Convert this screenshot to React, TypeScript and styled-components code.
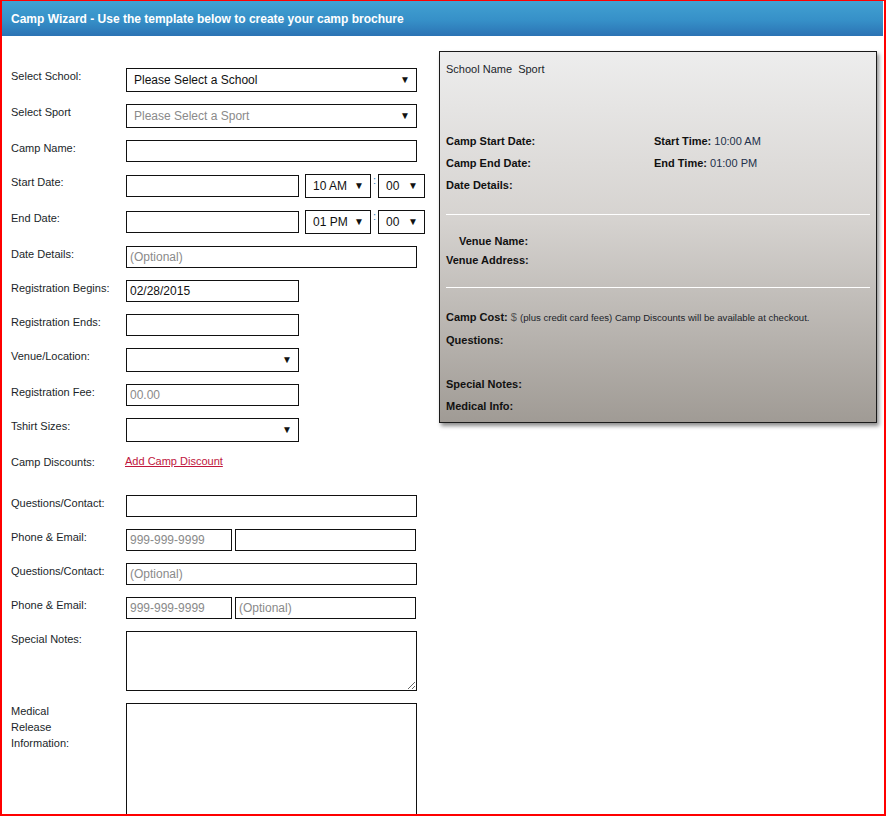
import React from "react";
import styled, { createGlobalStyle } from "styled-components";

const GlobalStyle = createGlobalStyle`
  html, body { margin: 0; padding: 0; background: #fff; }
  body { font-family: "Liberation Sans", Arial, sans-serif; }
  * { box-sizing: border-box; }
`;

const Frame = styled.div`
  width: 886px;
  height: 816px;
  border: 2px solid #ff0000;
  border-top-width: 1px;
  overflow: hidden;
  background: #fff;
`;

const Header = styled.div`
  height: 35px;
  display: flex;
  align-items: center;
  padding-left: 9px;
  margin-right: 1px;
  background: linear-gradient(to bottom, #42a1d2 0%, #3690c8 55%, #2b73b4 100%);
  color: #fff;
  font-weight: bold;
  font-size: 12px;
`;

const Body = styled.div`
  display: flex;
  align-items: flex-start;
`;

const FormColumn = styled.div`
  width: 437px;
  flex-shrink: 0;
  padding: 32px 0 0 9px;
  display: flex;
  flex-direction: column;
  gap: 12px;
`;

const Row = styled.div<{ $after?: number }>`
  display: flex;
  align-items: flex-start;
  margin-bottom: ${(p) => p.$after ?? 0}px;
`;

const Label = styled.div<{ $top?: number }>`
  width: 115px;
  flex-shrink: 0;
  padding-top: ${(p) => p.$top ?? 0}px;
  font-size: 11px;
  line-height: 16px;
  color: #1b1f2a;
`;

const Fields = styled.div`
  display: flex;
  align-items: center;
`;

const TextBox = styled.input<{ $w: number }>`
  width: ${(p) => p.$w}px;
  height: 22px;
  margin: 0;
  padding: 0 3px;
  border: 1px solid #111;
  border-radius: 0;
  font-family: "Liberation Sans", Arial, sans-serif;
  font-size: 12px;
  color: #111;
  background: #fff;
  outline: none;
  &::placeholder { color: #8a8a8a; }
`;

const NoteArea = styled.textarea<{ $h: number }>`
  width: 291px;
  height: ${(p) => p.$h}px;
  margin: 0;
  padding: 3px;
  border: 1px solid #111;
  border-radius: 0;
  font-family: "Liberation Sans", Arial, sans-serif;
  font-size: 12px;
  display: block;
  outline: none;
`;

const SelectBox = styled.div<{ $w: number; $muted?: boolean }>`
  width: ${(p) => p.$w}px;
  height: 24px;
  border: 1px solid #111;
  background: #fff;
  display: flex;
  align-items: center;
  justify-content: space-between;
  padding: 0 6px 0 7px;
  font-size: 12px;
  color: ${(p) => (p.$muted ? "#8a8a8a" : "#111")};
`;

const Caret = styled.span`
  font-size: 10px;
  color: #111;
  line-height: 1;
`;

const TimeColon = styled.span`
  width: 7px;
  text-align: center;
  font-size: 11px;
  color: #2a7ab8;
  align-self: flex-start;
  line-height: 12px;
`;

const Gap = styled.span<{ $w: number }>`
  display: inline-block;
  width: ${(p) => p.$w}px;
`;

const DiscountLink = styled.a`
  font-size: 11px;
  line-height: 14px;
  margin-left: -1px;
  color: #c0163d;
  text-decoration: underline;
  cursor: pointer;
`;

const Preview = styled.div`
  width: 438px;
  height: 372px;
  margin-top: 15px;
  border: 1px solid #1a1a1a;
  background: linear-gradient(to bottom, #ededed 0%, #d6d3d0 45%, #a09b95 100%);
  box-shadow: 2px 3px 4px rgba(0, 0, 0, 0.45);
  padding: 10px 6px 0 6px;
  font-size: 11px;
  color: #1b1f2a;
`;

const Line = styled.div<{ $top?: number; $indent?: number }>`
  line-height: 14px;
  margin-top: ${(p) => p.$top ?? 0}px;
  padding-left: ${(p) => p.$indent ?? 0}px;
`;

const Pair = styled.div<{ $top?: number }>`
  display: grid;
  grid-template-columns: 208px 1fr;
  line-height: 14px;
  margin-top: ${(p) => p.$top ?? 0}px;
`;

const B = styled.b`
  font-weight: bold;
  color: #111;
`;

const Value = styled.span`
  color: #22304a;
`;

const Dollar = styled.span`
  color: #555;
`;

const Fine = styled.span`
  font-size: 9.6px;
  color: #1b1f2a;
`;

const Divider = styled.hr<{ $top: number }>`
  border: 0;
  border-top: 1px solid #fff;
  margin: ${(p) => p.$top}px 0 0 0;
  height: 0;
`;

function Select({ w, text, muted }: { w: number; text?: string; muted?: boolean }) {
  return (
    <SelectBox $w={w} $muted={muted}>
      <span>{text ?? ""}</span>
      <Caret>▼</Caret>
    </SelectBox>
  );
}

export default function App() {
  return (
    <>
      <GlobalStyle />
      <Frame>
        <Header>Camp Wizard - Use the template below to create your camp brochure</Header>
        <Body>
          <FormColumn>
            <Row>
              <Label>Select School:</Label>
              <Select w={291} text="Please Select a School" />
            </Row>
            <Row>
              <Label>Select Sport</Label>
              <Select w={291} text="Please Select a Sport" muted />
            </Row>
            <Row>
              <Label>Camp Name:</Label>
              <TextBox $w={291} />
            </Row>
            <Row>
              <Label>Start Date:</Label>
              <Fields>
                <TextBox $w={173} />
                <Gap $w={6} />
                <Select w={66} text="10 AM" />
                <TimeColon>:</TimeColon>
                <Select w={47} text="00" />
              </Fields>
            </Row>
            <Row>
              <Label>End Date:</Label>
              <Fields>
                <TextBox $w={173} />
                <Gap $w={6} />
                <Select w={66} text="01 PM" />
                <TimeColon>:</TimeColon>
                <Select w={47} text="00" />
              </Fields>
            </Row>
            <Row>
              <Label>Date Details:</Label>
              <TextBox $w={291} placeholder="(Optional)" />
            </Row>
            <Row>
              <Label>Registration Begins:</Label>
              <TextBox $w={173} defaultValue="02/28/2015" />
            </Row>
            <Row>
              <Label>Registration Ends:</Label>
              <TextBox $w={173} />
            </Row>
            <Row>
              <Label>Venue/Location:</Label>
              <Select w={173} />
            </Row>
            <Row>
              <Label>Registration Fee:</Label>
              <TextBox $w={173} placeholder="00.00" />
            </Row>
            <Row>
              <Label>Tshirt Sizes:</Label>
              <Select w={173} />
            </Row>
            <Row $after={13}>
              <Label>Camp Discounts:</Label>
              <DiscountLink>Add Camp Discount</DiscountLink>
            </Row>
            <Row>
              <Label>Questions/Contact:</Label>
              <TextBox $w={291} />
            </Row>
            <Row>
              <Label>Phone &amp; Email:</Label>
              <Fields>
                <TextBox $w={106} placeholder="999-999-9999" />
                <Gap $w={3} />
                <TextBox $w={181} />
              </Fields>
            </Row>
            <Row>
              <Label>Questions/Contact:</Label>
              <TextBox $w={291} placeholder="(Optional)" />
            </Row>
            <Row>
              <Label>Phone &amp; Email:</Label>
              <Fields>
                <TextBox $w={106} placeholder="999-999-9999" />
                <Gap $w={3} />
                <TextBox $w={181} placeholder="(Optional)" />
              </Fields>
            </Row>
            <Row>
              <Label>Special Notes:</Label>
              <NoteArea $h={60} />
            </Row>
            <Row>
              <Label>
                Medical
                <br />
                Release
                <br />
                Information:
              </Label>
              <NoteArea $h={120} />
            </Row>
          </FormColumn>

          <Preview>
            <Line>School Name&nbsp;&nbsp;Sport</Line>
            <Pair $top={58}>
              <B>Camp Start Date:</B>
              <span>
                <B>Start Time:</B> <Value>10:00 AM</Value>
              </span>
            </Pair>
            <Pair $top={8}>
              <B>Camp End Date:</B>
              <span>
                <B>End Time:</B> <Value>01:00 PM</Value>
              </span>
            </Pair>
            <Line $top={8}>
              <B>Date Details:</B>
            </Line>
            <Divider $top={22} />
            <Line $top={19} $indent={13}>
              <B>Venue Name:</B>
            </Line>
            <Line $top={5}>
              <B>Venue Address:</B>
            </Line>
            <Divider $top={20} />
            <Line $top={22}>
              <B>Camp Cost:</B> <Dollar>$</Dollar>{" "}
              <Fine>(plus credit card fees) Camp Discounts will be available at checkout.</Fine>
            </Line>
            <Line $top={8}>
              <B>Questions:</B>
            </Line>
            <Line $top={30}>
              <B>Special Notes:</B>
            </Line>
            <Line $top={8}>
              <B>Medical Info:</B>
            </Line>
          </Preview>
        </Body>
      </Frame>
    </>
  );
}
